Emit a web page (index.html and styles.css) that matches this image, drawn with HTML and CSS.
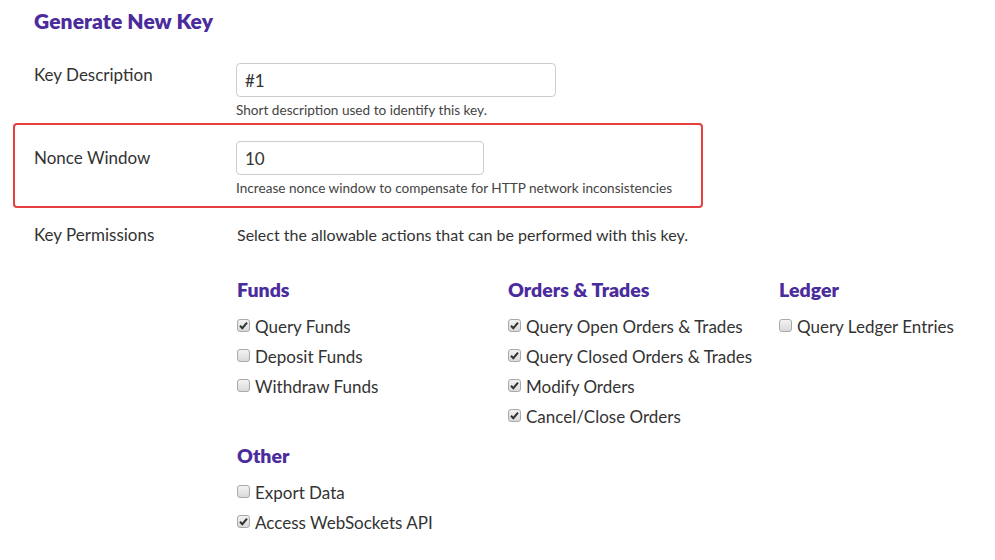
FILE: index.html
```html
<!DOCTYPE html>
<html>
<head>
<meta charset="utf-8">
<link rel="stylesheet" href="styles.css">
</head>
<body>
<div class="page">
  <h1 class="title">Generate New Key</h1>

  <div class="row row-desc">
    <div class="label">Key Description</div>
    <div class="field">
      <input class="input input-desc" type="text" value="#1">
      <div class="help">Short description used to identify this key.</div>
    </div>
  </div>

  <div class="row row-nonce">
    <div class="label">Nonce Window</div>
    <div class="field">
      <input class="input input-nonce" type="text" value="10">
      <div class="help">Increase nonce window to compensate for HTTP network inconsistencies</div>
    </div>
  </div>

  <div class="row row-perm">
    <div class="label">Key Permissions</div>
    <div class="field">
      <div class="perm-intro">Select the allowable actions that can be performed with this key.</div>
      <div class="groups">
        <div class="group">
          <h2 class="group-title">Funds</h2>
          <label class="item"><input type="checkbox" checked><span>Query Funds</span></label>
          <label class="item"><input type="checkbox"><span>Deposit Funds</span></label>
          <label class="item"><input type="checkbox"><span>Withdraw Funds</span></label>
        </div>
        <div class="group">
          <h2 class="group-title">Orders &amp; Trades</h2>
          <label class="item"><input type="checkbox" checked><span>Query Open Orders &amp; Trades</span></label>
          <label class="item"><input type="checkbox" checked><span>Query Closed Orders &amp; Trades</span></label>
          <label class="item"><input type="checkbox" checked><span>Modify Orders</span></label>
          <label class="item"><input type="checkbox" checked><span>Cancel/Close Orders</span></label>
        </div>
        <div class="group">
          <h2 class="group-title">Ledger</h2>
          <label class="item"><input type="checkbox"><span>Query Ledger Entries</span></label>
        </div>
        <div class="group group-other">
          <h2 class="group-title">Other</h2>
          <label class="item"><input type="checkbox"><span>Export Data</span></label>
          <label class="item"><input type="checkbox" checked><span>Access WebSockets API</span></label>
        </div>
      </div>
    </div>
  </div>
</div>
</body>
</html>
```

FILE: styles.css
```css
html, body {
  margin: 0;
  padding: 0;
  background: #ffffff;
}
body {
  font-family: "Lato", "Open Sans", sans-serif;
  color: #333333;
}
.page {
  padding: 0 0 0 34px;
  width: 940px;
}
.title {
  margin: 0;
  padding-top: 8px;
  font-size: 21px;
  line-height: 26px;
  font-weight: 800;
  color: #4a2c9c;
  letter-spacing: 0.1px;
}
.row {
  display: flex;
}
.label {
  flex: 0 0 202px;
  width: 202px;
  font-size: 17px;
  line-height: 20px;
  color: #333;
}
.field {
  flex: 1;
  min-width: 0;
}
.row-desc {
  margin-top: 29px;
}
.row-desc .label {
  margin-top: 2px;
}
.row-nonce {
  margin: 4px 0 0 -21px;
  padding: 16px 0 9px 19px;
  width: 667px;
  border: 2px solid #e5403f;
  border-radius: 4px;
}
.row-nonce .label {
  margin-top: 7px;
}
.input {
  display: block;
  box-sizing: border-box;
  height: 34px;
  border: 1px solid #cccccc;
  border-radius: 4px;
  padding: 0 8px;
  font-family: inherit;
  font-size: 17px;
  color: #333;
  background: #fff;
  outline: none;
}
.input-desc {
  width: 320px;
}
.input-nonce {
  width: 248px;
}
.help {
  margin-top: 4px;
  font-size: 13.6px;
  line-height: 18px;
  color: #444;
}
.row-perm {
  margin-top: 17px;
}
.perm-intro {
  margin-left: 1px;
  font-size: 16px;
  line-height: 20px;
  color: #333;
}
.groups {
  display: grid;
  grid-template-columns: 271px 271px 200px;
  margin-top: 33px;
  margin-left: 1px;
}
.group-other {
  grid-column: 1;
  margin-top: 12px;
}
.group-title {
  margin: 0 0 10px;
  font-size: 19.5px;
  line-height: 24px;
  font-weight: 800;
  color: #4a2c9c;
}
.item {
  display: flex;
  align-items: center;
  height: 30px;
  font-size: 17px;
  color: #333;
  white-space: nowrap;
}
.item input {
  -webkit-appearance: none;
  appearance: none;
  flex: 0 0 auto;
  box-sizing: border-box;
  margin: -3px 5px 0 0;
  width: 13px;
  height: 13px;
  border: 1px solid #a9a9a9;
  border-radius: 3px;
  background: linear-gradient(#f2f2f2, #dadada);
}
.item input:checked {
  background: url("data:image/svg+xml,%3Csvg xmlns='http://www.w3.org/2000/svg' width='11' height='11' viewBox='0 0 11 11'%3E%3Cpath d='M2 5.8 L4.3 8.2 L9 2.6' fill='none' stroke='%23333' stroke-width='2'/%3E%3C/svg%3E") center / 11px 11px no-repeat, linear-gradient(#f2f2f2, #dadada);
}
.item span {
  line-height: 20px;
}
```
